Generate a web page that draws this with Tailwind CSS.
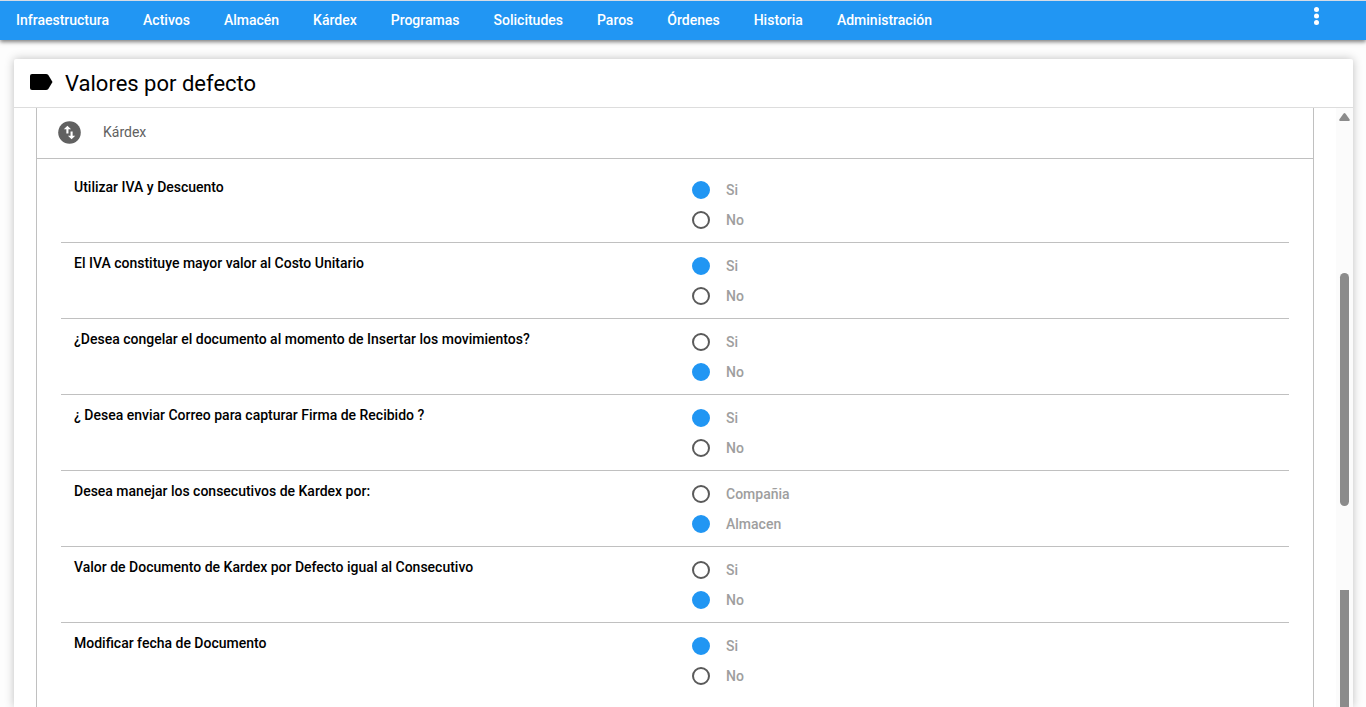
<!DOCTYPE html>
<html lang="es">
  <head>
    <meta charset="UTF-8" />
    <meta name="viewport" content="width=device-width, initial-scale=1.0" />
    <title>Valores por defecto</title>
    <script src="https://cdn.jsdelivr.net/npm/@tailwindcss/browser@4"></script>
  </head>
  <body class="flex h-screen flex-col overflow-hidden bg-[#fdfdfd] font-[Roboto,sans-serif] text-sm text-black">
    <header class="z-10 flex h-10 shrink-0 items-start justify-between border-t border-[#d5dbe5] bg-[#2196f3] pr-[41px] pl-4 shadow-[0_2px_4px_rgba(0,0,0,0.5)]">
      <nav class="flex h-[38px] items-center gap-[34px] font-medium whitespace-nowrap text-white">
        <a href="#">Infraestructura</a>
        <a href="#">Activos</a>
        <a href="#">Almacén</a>
        <a href="#">Kárdex</a>
        <a href="#">Programas</a>
        <a href="#">Solicitudes</a>
        <a href="#">Paros</a>
        <a href="#">Órdenes</a>
        <a href="#">Historia</a>
        <a href="#">Administración</a>
      </nav>
      <button type="button" aria-label="Más opciones" class="mt-1">
        <svg class="h-6 w-[17px]" viewBox="0 0 17 24" fill="#fff">
          <circle cx="8.5" cy="4.5" r="2.5" />
          <circle cx="8.5" cy="11" r="2.5" />
          <circle cx="8.5" cy="17.5" r="2.5" />
        </svg>
      </button>
    </header>

    <main class="mr-[13px] ml-3.5 mt-[19px] flex min-h-0 flex-1 flex-col rounded-t-xs bg-white shadow-[0_0_10px_rgba(0,0,0,0.25)]">
      <div class="flex h-[49px] shrink-0 items-center gap-3 border-b border-[#dddddd] pl-4">
        <svg class="mb-0.5 h-4 w-[23px]" viewBox="0 0 23 16">
          <path d="M2 0h14q1.500 0 2.300 1L22.500 8l-4.200 7q-.8 1-2.300 1H2q-2 0-2-2V2q0-2 2-2z" />
        </svg>
        <h1 class="pt-0.5 text-[22px]">Valores por defecto</h1>
      </div>

      <div class="flex min-h-0 flex-1 overflow-hidden">
        <section class="mx-[22px] flex-1 border-x border-[#c0c0c0]">
          <div class="flex h-[51px] items-center gap-[22px] border-b border-[#c0c0c0] pb-0.5 pl-[21px] text-[#616161]">
            <svg class="size-[23px]" viewBox="1 1 22 22">
              <circle cx="12" cy="12" r="10.800" fill="#616161" />
              <path fill="#fff" d="M6.500 9 10 5.500 13.500 9H11v4H9V9H6.500zm11 6L14 18.500 10.500 15H13v-4h2v4h2.500z" />
            </svg>
            <h2>Kárdex</h2>
          </div>
          <div id="questions" class="px-6 pt-2"></div>
        </section>

        <div class="flex w-[17px] flex-col items-center bg-[#fbfbfb]" aria-hidden="true">
          <svg class="mt-[5px] h-2 w-[11px] shrink-0" viewBox="0 0 11 8">
            <path fill="#8b8b8b" d="M4.600.6q.9-1 1.800 0L10.700 6.500Q11 8 10 8H1Q0 8 .3 6.500z" />
          </svg>
          <div class="mt-[152px] h-[233px] w-[9px] shrink-0 rounded-full bg-[#8b8b8b]"></div>
          <div class="mt-[84px] w-[9px] flex-1 bg-[#8b8b8b]"></div>
        </div>
      </div>
    </main>

    <script>
      const questions = [
        { text: "Utilizar IVA y Descuento", options: ["Si", "No"], value: "Si" },
        { text: "El IVA constituye mayor valor al Costo Unitario", options: ["Si", "No"], value: "Si" },
        { text: "¿Desea congelar el documento al momento de Insertar los movimientos?", options: ["Si", "No"], value: "No" },
        { text: "¿ Desea enviar Correo para capturar Firma de Recibido ?", options: ["Si", "No"], value: "Si" },
        { text: "Desea manejar los consecutivos de Kardex por:", options: ["Compañia", "Almacen"], value: "Almacen" },
        { text: "Valor de Documento de Kardex por Defecto igual al Consecutivo", options: ["Si", "No"], value: "No" },
        { text: "Modificar fecha de Documento", options: ["Si", "No"], value: "Si" },
      ];

      document.getElementById("questions").innerHTML = questions
        .map(
          (q, i) => `
            <div role="radiogroup" aria-labelledby="q${i}" class="grid grid-cols-2 border-b border-[#c0c0c0] pt-2 pb-[7px] font-medium last:border-b-0">
              <p id="q${i}" class="pt-0.5 pl-[13px]">${q.text}</p>
              <div class="pl-[17px]">
                ${q.options
                  .map(
                    (option) => `
                      <label class="flex h-[30px] items-center gap-4 text-[#9e9e9e]">
                        <input type="radio" name="q${i}" ${option === q.value ? "checked" : ""} class="size-[18px] appearance-none rounded-full border-2 border-[#5a5a5a] checked:border-[#2196f3] checked:bg-[#2196f3]" />
                        ${option}
                      </label>`
                  )
                  .join("")}
              </div>
            </div>`
        )
        .join("");
    </script>
  </body>
</html>
